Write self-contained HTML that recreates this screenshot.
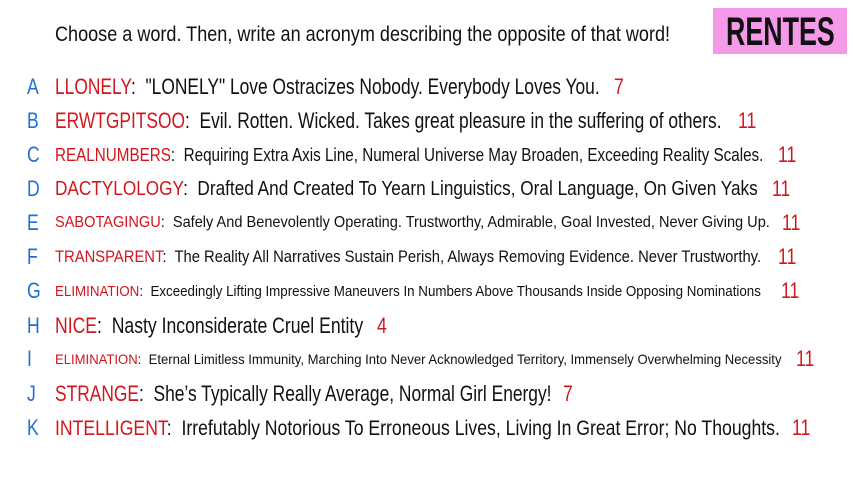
<!DOCTYPE html>
<html><head><meta charset="utf-8"><style>
body{margin:0;width:853px;height:480px;background:#fff;position:relative;overflow:hidden;font-family:"Liberation Sans",sans-serif}
.l{position:absolute;white-space:nowrap;line-height:1;transform-origin:left center;color:#111}
.let{position:absolute;left:27px;color:#1f6fd0;font-size:22px;transform:scaleX(.8);transform-origin:left center;line-height:1}
.n{position:absolute;color:#d4151c;font-size:22px;line-height:1;transform:scaleX(.8);transform-origin:left center}
.w{color:#d4151c}
</style></head><body>
<div class="l" style="left:55px;top:24px;font-size:21px;transform:scaleX(.86)">Choose a word. Then, write an acronym describing the opposite of that word!</div>
<div style="position:absolute;left:713px;top:8px;width:134px;height:46px;background:#f59ae9"></div>
<div class="l" style="left:726px;top:12px;font-size:40px;font-weight:bold;transform:scaleX(.67);color:#111">RENTES</div>

<div class="let" style="top:76px">A</div>
<div class="l" style="left:55px;top:76px;font-size:22px;transform:scaleX(.79)"><span class="w">LLONELY</span>:&nbsp; "LONELY" Love Ostracizes Nobody. Everybody Loves You.</div>
<div class="n" style="left:614px;top:76px">7</div>

<div class="let" style="top:110px">B</div>
<div class="l" style="left:55px;top:110px;font-size:22px;transform:scaleX(.79)"><span class="w">ERWTGPITSOO</span>:&nbsp; Evil. Rotten. Wicked. Takes great pleasure in the suffering of others.</div>
<div class="n" style="left:738px;top:110px">11</div>

<div class="let" style="top:144px">C</div>
<div class="l" style="left:55px;top:146px;font-size:18px;transform:scaleX(.846)"><span class="w">REALNUMBERS</span>:&nbsp; Requiring Extra Axis Line, Numeral Universe May Broaden, Exceeding Reality Scales.</div>
<div class="n" style="left:778px;top:144px">11</div>

<div class="let" style="top:178px">D</div>
<div class="l" style="left:55px;top:179px;font-size:20px;transform:scaleX(.86)"><span class="w">DACTYLOLOGY</span>:&nbsp; Drafted And Created To Yearn Linguistics, Oral Language, On Given Yaks</div>
<div class="n" style="left:772px;top:178px">11</div>

<div class="let" style="top:212px">E</div>
<div class="l" style="left:55px;top:215px;font-size:16px;transform:scaleX(.91)"><span class="w">SABOTAGINGU</span>:&nbsp; Safely And Benevolently Operating. Trustworthy, Admirable, Goal Invested, Never Giving Up.</div>
<div class="n" style="left:782px;top:212px">11</div>

<div class="let" style="top:246px">F</div>
<div class="l" style="left:55px;top:248px;font-size:17px;transform:scaleX(.87)"><span class="w">TRANSPARENT</span>:&nbsp; The Reality All Narratives Sustain Perish, Always Removing Evidence. Never Trustworthy.</div>
<div class="n" style="left:778px;top:246px">11</div>

<div class="let" style="top:280px">G</div>
<div class="l" style="left:55px;top:284px;font-size:15px;transform:scaleX(.89)"><span class="w">ELIMINATION</span>:&nbsp; Exceedingly Lifting Impressive Maneuvers In Numbers Above Thousands Inside Opposing Nominations</div>
<div class="n" style="left:781px;top:280px">11</div>

<div class="let" style="top:315px">H</div>
<div class="l" style="left:55px;top:315px;font-size:22px;transform:scaleX(.80)"><span class="w">NICE</span>:&nbsp; Nasty Inconsiderate Cruel Entity</div>
<div class="n" style="left:377px;top:315px">4</div>

<div class="let" style="top:348px">I</div>
<div class="l" style="left:55px;top:352px;font-size:14px;transform:scaleX(.935)"><span class="w">ELIMINATION</span>:&nbsp; Eternal Limitless Immunity, Marching Into Never Acknowledged Territory, Immensely Overwhelming Necessity</div>
<div class="n" style="left:796px;top:348px">11</div>

<div class="let" style="top:383px">J</div>
<div class="l" style="left:55px;top:383px;font-size:22px;transform:scaleX(.79)"><span class="w">STRANGE</span>:&nbsp; She’s Typically Really Average, Normal Girl Energy!</div>
<div class="n" style="left:563px;top:383px">7</div>

<div class="let" style="top:417px">K</div>
<div class="l" style="left:55px;top:418px;font-size:21px;transform:scaleX(.84)"><span class="w">INTELLIGENT</span>:&nbsp; Irrefutably Notorious To Erroneous Lives, Living In Great Error; No Thoughts.</div>
<div class="n" style="left:792px;top:417px">11</div>
</body></html>
